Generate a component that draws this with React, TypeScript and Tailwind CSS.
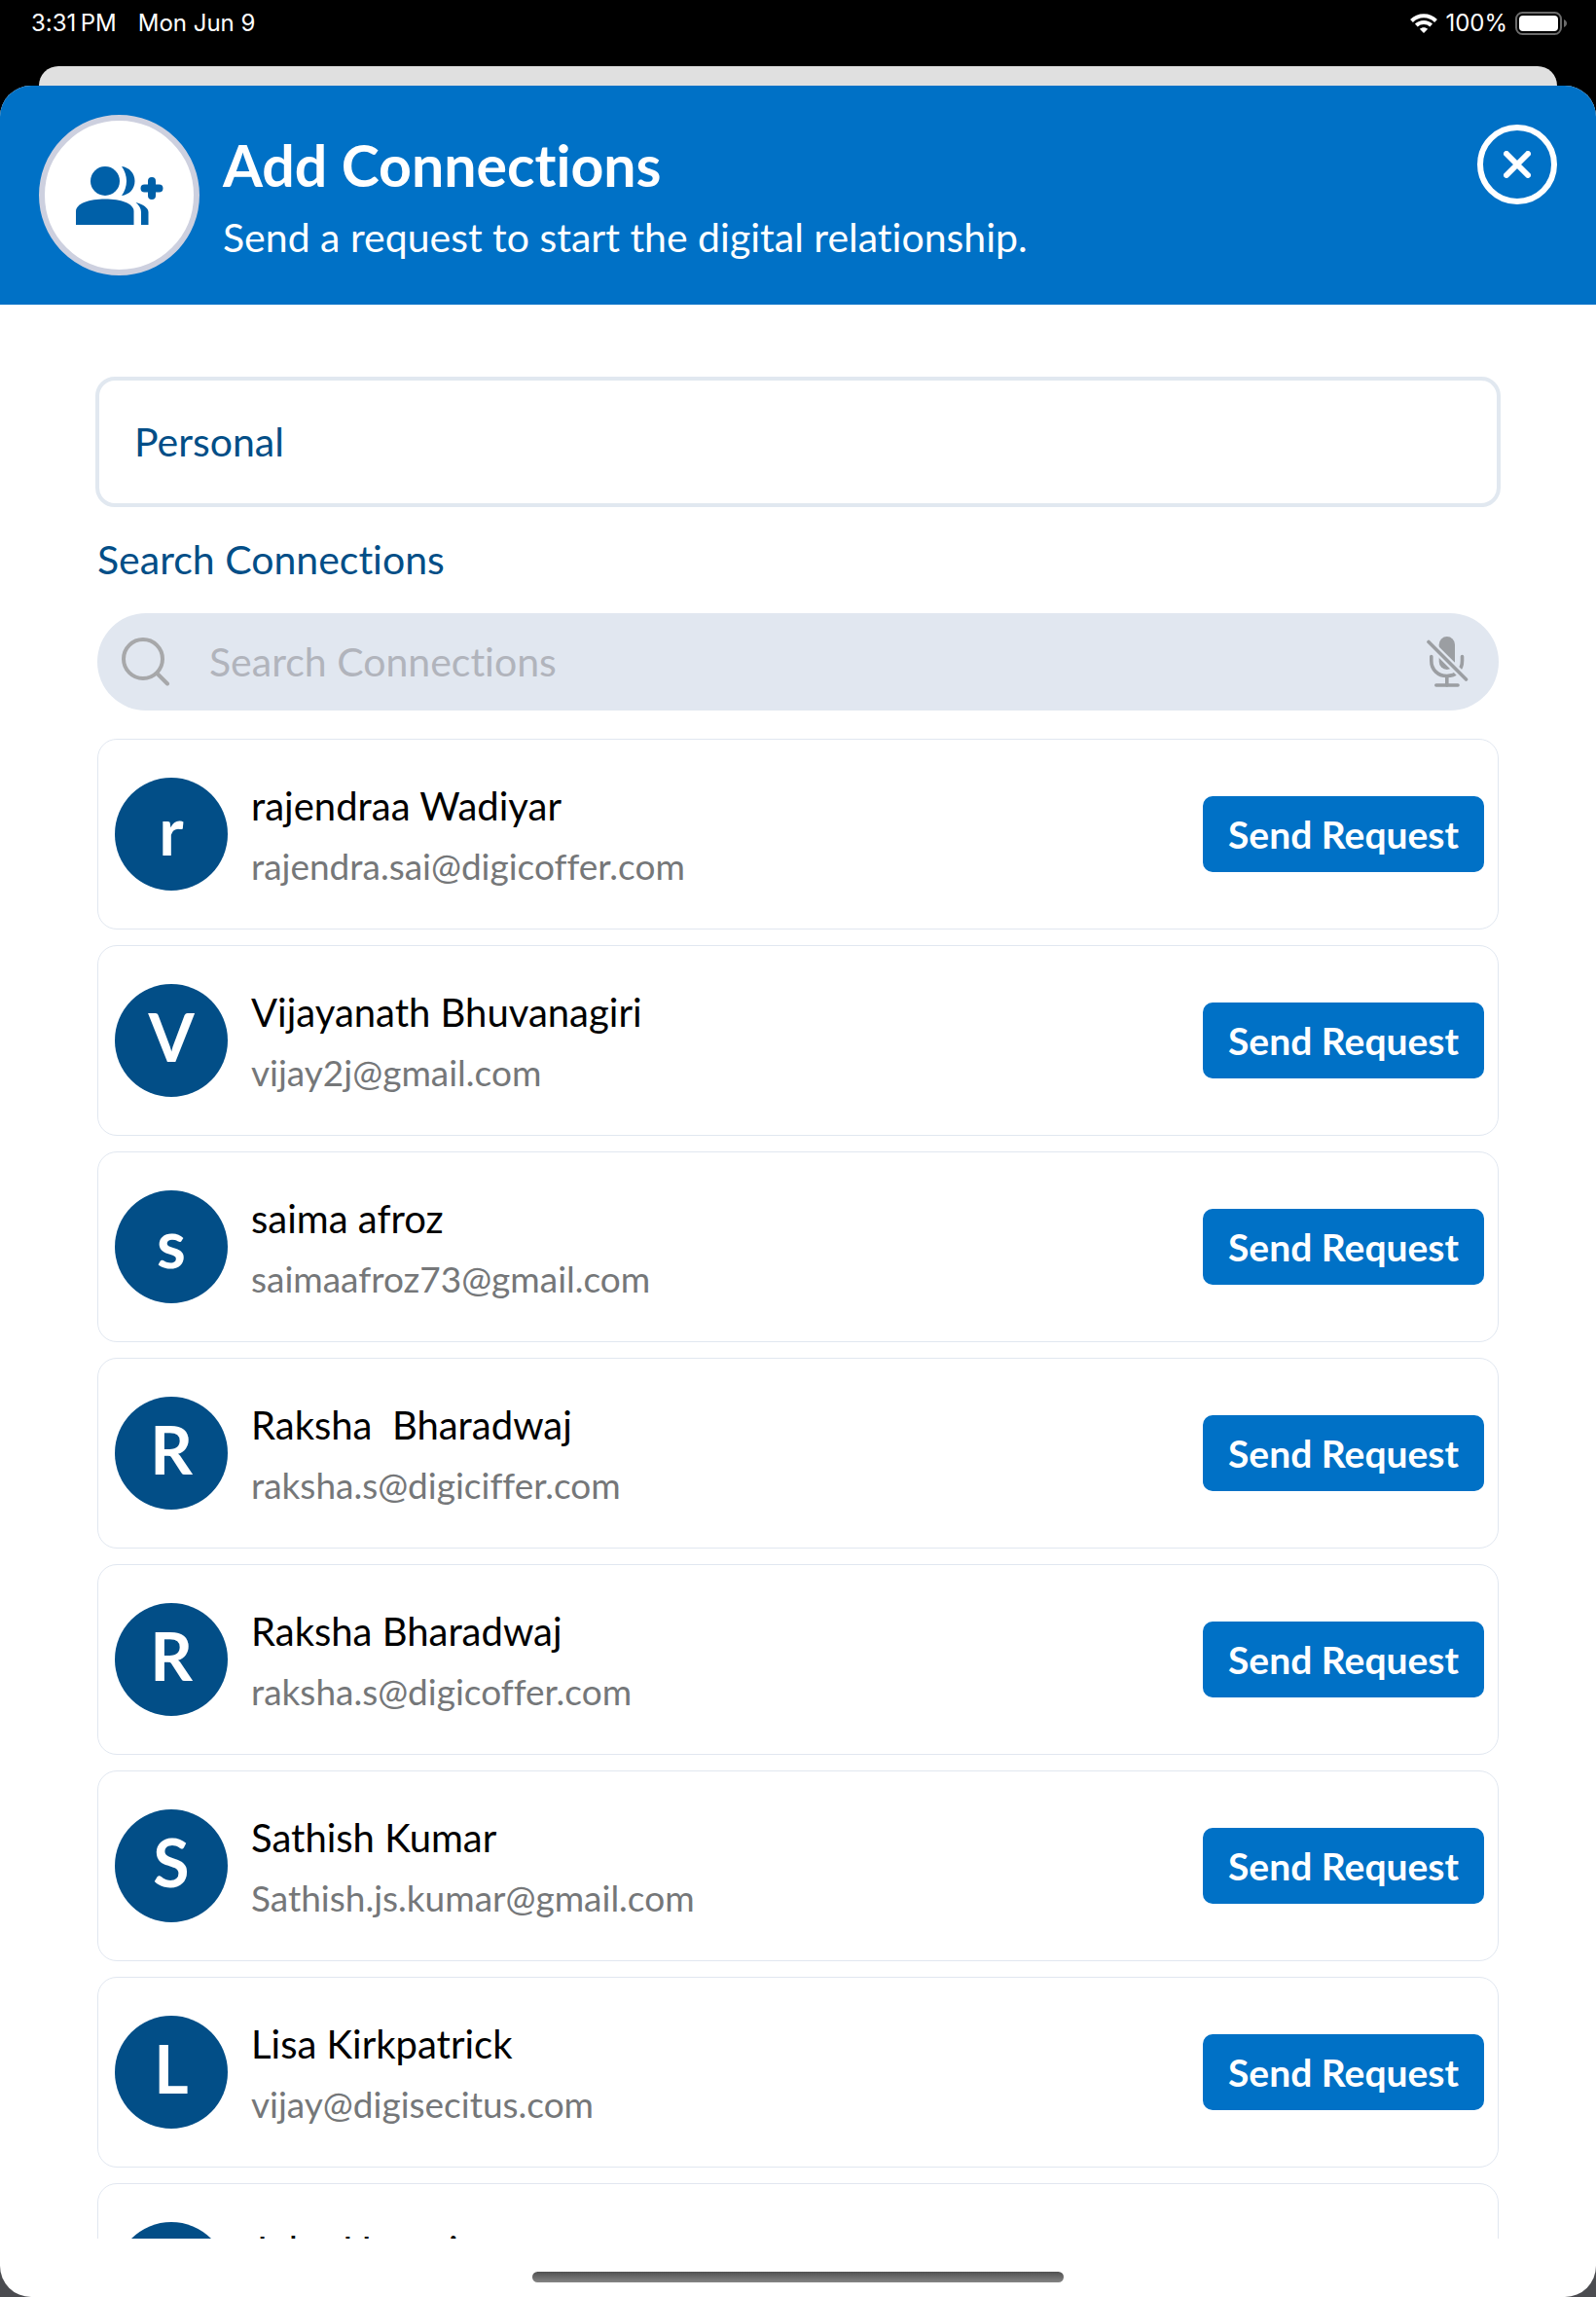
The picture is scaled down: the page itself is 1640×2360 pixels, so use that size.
import { useState } from "react";

interface Connection {
  name: string;
  email?: string;
}

const connections: Connection[] = [
  { name: "rajendraa Wadiyar", email: "rajendra.sai@digicoffer.com" },
  { name: "Vijayanath Bhuvanagiri", email: "vijay2j@gmail.com" },
  { name: "saima afroz", email: "saimaafroz73@gmail.com" },
  { name: "Raksha  Bharadwaj", email: "raksha.s@digiciffer.com" },
  { name: "Raksha Bharadwaj", email: "raksha.s@digicoffer.com" },
  { name: "Sathish Kumar", email: "Sathish.js.kumar@gmail.com" },
  { name: "Lisa Kirkpatrick", email: "vijay@digisecitus.com" },
  { name: "John Hasani" },
];

function AddPeopleIcon() {
  return (
    <svg className="w-[90px] h-[60px]" viewBox="0 0 90 60" fill="#0060a8" aria-hidden="true">
      <circle cx="30" cy="15" r="15" />
      <path d="M47 0C55 1 60.500 7 60.500 15S55 29 47 30C50 26 52 20.500 52 15S50 4 47 0Z" />
      <path d="M0 60V46C0 38 14 33.500 30 33.500S59.500 38 59.500 46V60Z" />
      <path d="M61.500 37C69 39 74.500 42.500 74.500 47V60H67V47C67 43.500 65 39.500 61.500 37Z" />
      <path d="M78 15V30M70.500 22.500H85.500" stroke="#0060a8" strokeWidth="8" strokeLinecap="round" />
    </svg>
  );
}

function CloseIcon() {
  return (
    <svg className="w-7 h-7" viewBox="0 0 28 28" fill="none" stroke="currentColor" strokeWidth="6" strokeLinecap="round" aria-hidden="true">
      <path d="M3 3L25 25M25 3L3 25" />
    </svg>
  );
}

function SearchIcon() {
  return (
    <svg className="w-[50px] h-[50px] shrink-0" viewBox="0 0 50 50" fill="none" stroke="#a7a8aa" strokeWidth="4" strokeLinecap="round" aria-hidden="true">
      <circle cx="22" cy="22" r="20" />
      <path d="M37 37.500L47 47.500" />
    </svg>
  );
}

function MicOffIcon() {
  return (
    <svg className="w-[43px] h-[53px]" viewBox="0 0 43 53" fill="none" stroke="#9b9ea2" strokeWidth="3.600" strokeLinecap="round" aria-hidden="true">
      <rect x="12.700" y="0" width="16.300" height="34" rx="8.150" fill="#9b9ea2" stroke="none" />
      <path d="M4.800 20.500V25C4.800 34 11.500 40.500 20.800 40.500S36.500 34 36.500 25V20.500" />
      <path d="M20.800 41V50" />
      <path d="M9.800 50H32" />
      <path d="M2 5.500L40.500 44" stroke="#e1e7f0" strokeWidth="8" />
      <path d="M2 5.500L40.500 44" />
    </svg>
  );
}

function StatusBar() {
  return (
    <div className="flex justify-between h-[68px] pl-8 pr-[30px] pt-2 text-white text-2xl font-['Inter',sans-serif]">
      <div className="flex gap-[22px] h-8 items-center">
        <span>3:31&#8201;PM</span>
        <span>Mon Jun 9</span>
      </div>
      <div className="flex gap-2 h-8 items-center">
        <svg className="w-7 h-5" viewBox="0 0 28 20" fill="none" stroke="white" strokeWidth="4" aria-hidden="true">
          <path d="M1.500 7.500C8.500 .500 19.500 .500 26.500 7.500" />
          <path d="M6.300 12C10.700 8 17.300 8 21.700 12" />
          <path d="M14 20L9.800 15.800C12.200 13.700 15.800 13.700 18.200 15.800Z" fill="white" stroke="none" />
        </svg>
        <span>100%</span>
        <svg className="w-[53px] h-6" viewBox="0 0 53 24" aria-hidden="true">
          <rect x="1" y="1" width="46" height="22" rx="6.500" fill="none" stroke="#6b6b6b" strokeWidth="2" />
          <rect x="4" y="4" width="40" height="16" rx="4" fill="white" />
          <path d="M50 8C54 9.500 54 14.500 50 16Z" fill="#6b6b6b" />
        </svg>
      </div>
    </div>
  );
}

function ConnectionCard({ connection }: { connection: Connection }) {
  return (
    <li className="flex items-center gap-6 h-[196px] shrink-0 pl-[17px] pr-3.5 border border-[#e1e7f0] rounded-[20px]">
      <div className="flex items-center justify-center w-[116px] h-[116px] shrink-0 pb-2 rounded-full bg-[#024e87] text-white text-[68px] leading-none font-bold">
        {connection.name[0]}
      </div>
      <div className="flex-1 min-w-0 pt-1">
        <p className="text-[40px] leading-[62px] text-black whitespace-pre">{connection.name}</p>
        <p className="text-[37px] leading-[62px] text-[#757779]">{connection.email}</p>
        {!connection.email && <div className="h-[62px]" />}
      </div>
      <button className="h-[78px] px-[26px] rounded-[10px] bg-[#0071c6] text-white text-[39px] font-bold whitespace-nowrap cursor-pointer">
        Send Request
      </button>
    </li>
  );
}

export default function App() {
  const [query, setQuery] = useState("");

  return (
    <div className="h-screen flex flex-col bg-black font-['Lato',sans-serif] [font-variant-ligatures:none]">
      <StatusBar />

      {/* Edge of the screen behind the sheet */}
      <div className="mx-10 h-5 shrink-0 rounded-t-[20px] bg-[#e0e0e0]" />

      <div className="flex-1 min-h-0 bg-linear-to-b from-black to-[#4b4c50]">
        <div className="h-full flex flex-col rounded-[32px] overflow-hidden bg-white">
          {/* Header */}
          <header className="flex items-start h-[225px] shrink-0 px-10 pt-[30px] bg-[#0071c6] text-white">
            <div className="flex items-center justify-center w-[165px] h-[165px] shrink-0 rounded-full bg-white border-6 border-[#cdd0df]">
              <AddPeopleIcon />
            </div>
            <div className="flex-1 pl-6 pt-3.5">
              <h1 className="text-[59px] leading-[76px] font-bold">Add Connections</h1>
              <p className="text-[41px] leading-[72px]">Send a request to start the digital relationship.</p>
            </div>
            <button
              aria-label="Close"
              className="flex items-center justify-center w-[82px] h-[82px] mt-2.5 shrink-0 rounded-full border-6 border-white cursor-pointer"
            >
              <CloseIcon />
            </button>
          </header>

          {/* Search form */}
          <main className="flex-1 min-h-0 flex flex-col px-[100px] pt-[74px]">
            <select
              aria-label="Connection type"
              className="appearance-none -mx-0.5 h-[134px] shrink-0 px-9 border-4 border-[#e1e8f0] rounded-[20px] bg-white text-[#024e87] text-[41px]"
            >
              <option>Personal</option>
            </select>
            <label htmlFor="search" className="pt-6 pb-[25px] text-[41px] leading-[60px] text-[#024e87]">
              Search Connections
            </label>
            <div className="flex items-center h-[100px] shrink-0 pl-[25px] pr-[31px] rounded-full bg-[#e1e7f0]">
              <SearchIcon />
              <input
                id="search"
                type="text"
                value={query}
                onChange={(e) => setQuery(e.target.value)}
                placeholder="Search Connections"
                className="flex-1 min-w-0 px-10 bg-transparent outline-none text-[41px] text-[#024e87] placeholder:text-[#b1b4bc]"
              />
              <button aria-label="Voice search" className="cursor-pointer">
                <MicOffIcon />
              </button>
            </div>

            <ul className="flex-1 min-h-0 flex flex-col gap-4 mt-[29px] overflow-hidden">
              {connections.map((connection, index) => (
                <ConnectionCard key={index} connection={connection} />
              ))}
            </ul>
          </main>

          {/* Home indicator */}
          <footer className="flex justify-center h-[60px] shrink-0 pt-[34px]">
            <div className="w-1/3 h-[11px] rounded-full bg-linear-to-b from-[#505050] to-[#858585]" />
          </footer>
        </div>
      </div>
    </div>
  );
}
